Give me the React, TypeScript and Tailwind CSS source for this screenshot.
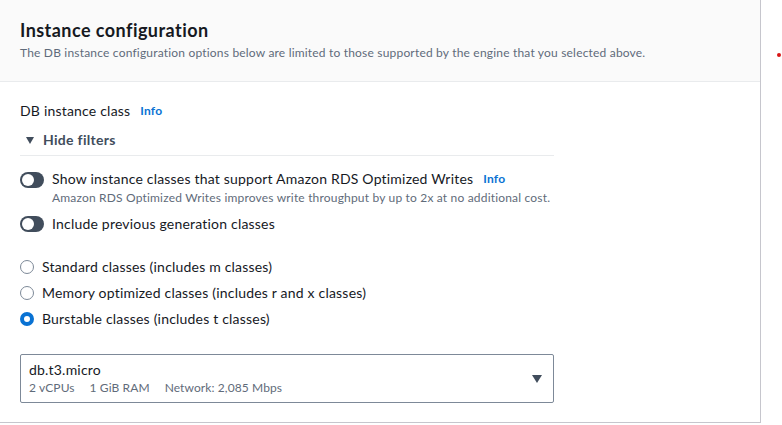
import React from "react";

const font = { fontFamily: "Lato, 'Open Sans', sans-serif" };

function Toggle() {
  return (
    <span className="relative inline-block h-[16px] w-[24px] shrink-0 rounded-full bg-[#414d5c]">
      <span className="absolute left-[2px] top-[2px] h-[12px] w-[12px] rounded-full bg-white" />
    </span>
  );
}

function Radio({ checked }: { checked?: boolean }) {
  return checked ? (
    <span className="inline-block h-[14px] w-[14px] shrink-0 rounded-full border-[4px] border-[#0972d3] bg-white" />
  ) : (
    <span className="inline-block h-[14px] w-[14px] shrink-0 rounded-full border-[1.5px] border-[#7d8998] bg-white" />
  );
}

export default function App() {
  return (
    <div className="relative h-[425px] w-[782px] overflow-hidden bg-white text-[#16191f] tracking-[0.2px]" style={font}>
      <div className="w-[761px] border-r border-b border-[#c6c6cd] bg-white">
        <div className="h-[82px] border-b border-[#e9ebed] bg-[#fafafa] px-[20px] pt-[18px]">
          <div className="text-[18px] font-bold leading-[24px] tracking-[0.45px] text-[#16191f]">Instance configuration</div>
          <div className="mt-[3px] text-[12px] leading-[16px] tracking-[0.19px] text-[#5f6b7a]">
            The DB instance configuration options below are limited to those supported by the engine that you selected above.
          </div>
        </div>
        <div className="px-[20px] pb-[19px] pt-[19px]">
          <div className="flex items-center gap-[10px] text-[14px] leading-[20px]">
            <span>DB instance class</span>
            <span className="text-[12px] font-bold tracking-[0.2px] text-[#0972d3]">Info</span>
          </div>
          <div className="w-[534px]">
            <div className="mt-[8px] flex items-center border-b border-[#e9ebed] pb-[4px] pl-[6px]">
              <svg width="8" height="7" viewBox="0 0 8 7" className="mr-[9px]">
                <path d="M0 0 H8 L4 7 Z" fill="#414d5c" />
              </svg>
              <span className="text-[14px] font-bold leading-[22px] tracking-[0.3px] text-[#414d5c]">Hide filters</span>
            </div>
            <div className="mt-[14px] flex items-start gap-[8px]">
              <div className="pt-[0px]"><Toggle /></div>
              <div>
                <div className="flex items-center gap-[10px] text-[14px] leading-[18px]">
                  <span>Show instance classes that support Amazon RDS Optimized Writes</span>
                  <span className="text-[12px] font-bold tracking-[0.2px] text-[#0972d3]">Info</span>
                </div>
                <div className="mt-[1px] text-[12px] leading-[18px] tracking-[0.18px] text-[#5f6b7a]">
                  Amazon RDS Optimized Writes improves write throughput by up to 2x at no additional cost.
                </div>
              </div>
            </div>
            <div className="mt-[7px] flex items-center gap-[8px]">
              <Toggle />
              <span className="text-[14px] leading-[20px]">Include previous generation classes</span>
            </div>
            <div className="mt-[23px] flex flex-col gap-[6px]">
              <div className="flex items-center gap-[8px]">
                <Radio />
                <span className="text-[14px] leading-[20px]">Standard classes (includes m classes)</span>
              </div>
              <div className="flex items-center gap-[8px]">
                <Radio />
                <span className="text-[14px] leading-[20px]">Memory optimized classes (includes r and x classes)</span>
              </div>
              <div className="flex items-center gap-[8px]">
                <Radio checked />
                <span className="text-[14px] leading-[20px]">Burstable classes (includes t classes)</span>
              </div>
            </div>
            <div className="mt-[25px] flex h-[49px] items-center justify-between rounded-[2px] border border-[#7d8998] pl-[8px] pr-[11px]">
              <div>
                <div className="text-[14px] leading-[18px]">db.t3.micro</div>
                <div className="flex gap-[15px] text-[12px] leading-[18px] tracking-[0.1px] text-[#5f6b7a]">
                  <span>2 vCPUs</span>
                  <span>1 GiB RAM</span>
                  <span>Network: 2,085 Mbps</span>
                </div>
              </div>
              <svg width="10" height="8" viewBox="0 0 10 8">
                <path d="M0 0 H10 L5 8 Z" fill="#414d5c" />
              </svg>
            </div>
          </div>
        </div>
      </div>
      <span className="absolute left-[777px] top-[53px] h-[4px] w-[4px] rounded-full bg-[#d91515]" />
    </div>
  );
}
